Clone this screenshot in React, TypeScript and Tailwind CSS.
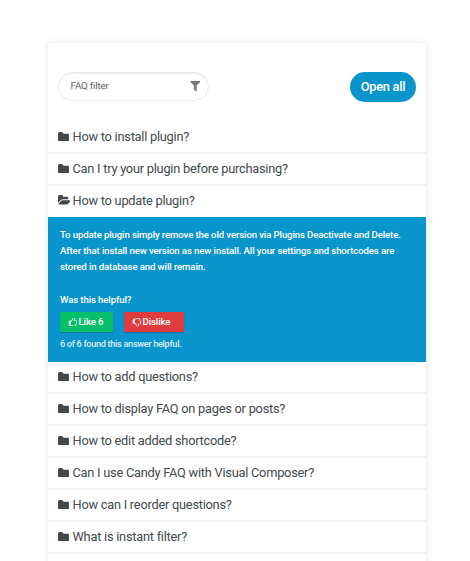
import React from "react";

const FOLDER =
  "M1664 608v704q0 92-66 158t-158 66h-1216q-92 0-158-66t-66-158v-960q0-92 66-158t158-66h320q92 0 158 66t66 158v32h672q92 0 158 66t66 158z";
const FOLDER_OPEN =
  "M1879 952q0 31-31 66l-336 396q-43 51-120.5 86.5t-143.5 35.5h-1088q-34 0-60.5-13t-26.5-43q0-31 31-66l336-396q43-51 120.5-86.5t143.5-35.5h1088q34 0 60.5 13t26.5 43zm-343-344v160h-832q-94 0-197 47.5t-164 119.5l-337 396-5 6q0-4-.5-12.5t-.5-12.5v-960q0-92 66-158t158-66h320q92 0 158 66t66 158v32h544q92 0 158 66t66 158z";
const FILTER =
  "M1403 295q17 41-14 70l-493 493v742q0 42-39 59-13 5-25 5-27 0-45-19l-256-256q-19-19-19-45v-486l-493-493q-31-29-14-70 17-39 59-39h1280q42 0 59 39z";
const THUMB =
  "M256 1344q0-26-19-45t-45-19-45 19-19 45 19 45 45 19 45-19 19-45zm1280-576q0-51-39-89.5t-89-38.5h-352q0-58 48-159.5t48-160.5q0-98-32-145t-128-47q-26 26-38 85t-30.5 125.5-59.5 109.5q-22 23-77 91-4 5-23 30t-31.5 41-34.5 42.5-40 44-38.5 35.5-40 27-35.5 9h-32v640h32q13 0 31.5 3t33 6.5 38 11 35 11.5 35.5 12.5 29 10.5q211 73 342 73h121q192 0 192-167 0-26-5-56 30-16 47.5-52.5t17.5-73.5-18-69q53-50 53-119 0-25-10-55.5t-25-47.5q32-1 53.5-47t21.5-81zm128-1q0 89-49 163 9 33 9 69 0 77-38 144 3 21 3 43 0 101-60 178 1 139-85 219.5t-227 80.5h-129q-96 0-189.5-22.5t-216.5-65.5q-116-40-138-40h-288q-53 0-90.5-37.5t-37.5-90.5v-640q0-53 37.5-90.5t90.5-37.5h274q36-24 137-155 58-75 107-128 24-25 35.5-85.5t30.5-126.5 62-108q39-37 90-37 84 0 151 32.5t102 101.5 35 186q0 93-48 192h176q104 0 180 76t76 179z";

function Icon({ d, box, className }: { d: string; box: string; className: string }) {
  return (
    <svg viewBox={box} className={className} fill="currentColor" aria-hidden="true">
      <path d={d} />
    </svg>
  );
}

function Question({ text, open = false }: { text: string; open?: boolean }) {
  return (
    <button
      className={
        "flex w-full shrink-0 items-center pl-[9.5px] text-left text-[12.8px] tracking-[-0.24px] text-[#42494c] " +
        (open ? "h-[31px] pb-[2px]" : "h-8 border-b-2 border-[#f1f1f1]")
      }
    >
      <span className="flex w-[15px] shrink-0 pb-px">
        {open ? (
          <Icon d={FOLDER_OPEN} box="0 128 1879 1408" className="h-[9.5px] w-[12.7px]" />
        ) : (
          <Icon d={FOLDER} box="0 128 1664 1408" className="h-[9.5px] w-[11.3px]" />
        )}
      </span>
      <span className="whitespace-nowrap">{text}</span>
    </button>
  );
}

const before = ["How to install plugin?", "Can I try your plugin before purchasing?"];
const after = [
  "How to add questions?",
  "How to display FAQ on pages or posts?",
  "How to edit added shortcode?",
  "Can I use Candy FAQ with Visual Composer?",
  "How can I reorder questions?",
  "What is instant filter?",
];

export default function App() {
  return (
    <main className="h-[561px] overflow-hidden bg-white pt-[43px] pl-12 font-['Roboto',sans-serif]">
      <section className="h-[600px] w-[378px] bg-white shadow-[0_0_7px_rgba(0,0,0,0.1)]">
        <header className="flex h-[79px] items-start justify-between pt-[29px] pr-[10px] pl-[10px]">
          <label className="flex h-[29px] w-[151px] items-center justify-between rounded-full border border-[#e9e9e9] pr-[8px] pb-px pl-[11.5px] text-[9.8px] tracking-[-0.2px] text-[#606060] shadow-[inset_0_1px_1px_rgba(0,0,0,0.07)]">
            FAQ filter
            <Icon d={FILTER} box="0 256 1408 1408" className="mt-px h-[10.5px] w-[10.5px] text-[#777777]" />
          </label>
          <button className="h-[30px] w-[66px] rounded-full bg-[#0a94cc] text-[12.8px] tracking-[-0.25px] font-medium text-white">
            Open all
          </button>
        </header>
        {before.map((q) => (
          <Question key={q} text={q} />
        ))}
        <Question text="How to update plugin?" open />
        <article className="h-[145px] bg-[#0a94cc] px-3 pt-[10px] text-[9.6px] leading-[16px] font-medium tracking-[-0.11px] text-white">
          <p className="whitespace-nowrap">
            To update plugin simply remove the old version via Plugins Deactivate and Delete.
            <br />
            After that install new version as new install. All your settings and shortcodes are
            <br />
            stored in database and will remain.
          </p>
          <p className="mt-[17px]">Was this helpful?</p>
          <div className="mt-[4px] flex gap-[11px]">
            <button className="flex h-5 w-[53px] items-center gap-[1.5px] bg-[#08bf69] pl-[8px] shadow-[0_1px_1px_rgba(0,0,0,0.18)]">
              <Icon d={THUMB} box="0 128 1664 1536" className="h-[8.5px] w-[9px]" />
              Like 6
            </button>
            <button className="flex h-5 w-[60px] items-center gap-[1.5px] bg-[#df3c3e] pl-[8px] shadow-[0_1px_1px_rgba(0,0,0,0.18)]">
              <Icon d={THUMB} box="0 128 1664 1536" className="h-[8.5px] w-[9px] -scale-y-100" />
              Dislike
            </button>
          </div>
          <p className="mt-[4px] text-[9.2px] tracking-[-0.33px] text-[#d9eef8]">6 of 6 found this answer helpful.</p>
        </article>
        {after.map((q) => (
          <Question key={q} text={q} />
        ))}
      </section>
    </main>
  );
}
